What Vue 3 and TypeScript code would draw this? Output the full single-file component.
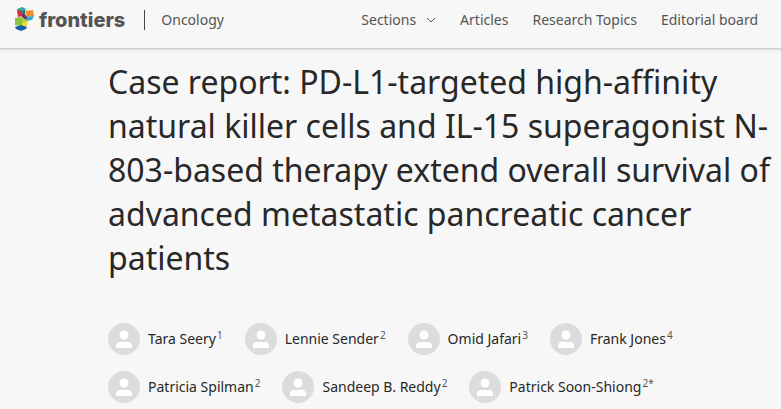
<script setup lang="ts">
interface Author {
  name: string
  mark: string
}

const links: string[] = ['Articles', 'Research Topics', 'Editorial board']

const authorRows: Author[][] = [
  [
    { name: 'Tara Seery', mark: '1' },
    { name: 'Lennie Sender', mark: '2' },
    { name: 'Omid Jafari', mark: '3' },
    { name: 'Frank Jones', mark: '4' },
  ],
  [
    { name: 'Patricia Spilman', mark: '2' },
    { name: 'Sandeep B. Reddy', mark: '2' },
    { name: 'Patrick Soon-Shiong', mark: '2*' },
  ],
]
</script>

<template>
  <div class="page">
    <header class="bar">
      <a class="brand" href="#">
        <svg class="logo" viewBox="0 0 20 26" aria-hidden="true">
          <path d="M2 2 7 0l4 2-1 2-4 1-4-2z" fill="#2aa9a5" />
          <path d="M2 3l5 1 1 5-5 1z" fill="#d92a35" />
          <path d="M7 4l3-1v4l-2 3z" fill="#1b7f6b" />
          <path d="M10 4l8-1 1 6-7 1z" fill="#f58a28" />
          <path d="M11 10l8-1-2 4-6 1-1-1z" fill="#2ba9d8" />
          <path d="M7 7l2-1 3 4-1 4-2 1-2-5z" fill="#66306f" />
          <path d="M0 11l7-1v9l-7-1z" fill="#8bc53f" />
          <path d="M7 13l6 1-1 5-5 1z" fill="#f0df2e" />
          <path d="M7 10l6 4-6 2z" fill="#b4cf3b" />
          <path d="M0 20l6-2 6 2-1 2-5 2-5-2z" fill="#175ba8" />
        </svg>
        <span class="wordmark">frontiers</span>
      </a>
      <a class="journal" href="#">Oncology</a>
      <nav class="nav" aria-label="Journal">
        <button class="link" type="button">
          Sections
          <svg class="chevron" viewBox="0 0 10 6" aria-hidden="true">
            <path d="M1 1l4 4 4-4" fill="none" stroke="currentColor" />
          </svg>
        </button>
        <a v-for="link in links" :key="link" class="link" href="#">{{ link }}</a>
      </nav>
    </header>
    <main class="article">
      <h1 class="title">
        Case report: PD-L1-targeted high-affinity natural killer cells and IL-15 superagonist
        N-803-based therapy extend overall survival of advanced metastatic pancreatic cancer patients
      </h1>
      <div class="authors">
        <ul v-for="(row, index) in authorRows" :key="index" class="row">
          <li v-for="author in row" :key="author.name" class="author">
            <svg class="avatar" viewBox="0 0 32 32" aria-hidden="true">
              <circle cx="16" cy="16" r="16" fill="#dcdcdc" />
              <circle cx="16" cy="12" r="4.5" fill="#fff" />
              <path d="M8 25v-2c0-3 2-4 4-4h8c2 0 4 1 4 4v2z" fill="#fff" />
            </svg>
            <span class="name">{{ author.name }}</span>
            <sup class="mark">{{ author.mark }}</sup>
          </li>
        </ul>
      </div>
    </main>
  </div>
</template>

<style>
body {
  margin: 0;
  background: #f7f7f7;
}
</style>

<style scoped>
.page {
  min-height: 100vh;
  background: #f7f7f7;
  color: #282828;
  font-family: "Noto Sans", "Open Sans", sans-serif;
}

.bar {
  display: flex;
  align-items: center;
  height: 40px;
  padding: 0 23px 8px 15px;
  border-bottom: 1px solid #cfcfcf;
  box-shadow: 0 1px 2px rgba(0, 0, 0, 0.12);
  color: #555;
  font-size: 14px;
  line-height: 20px;
}

.brand {
  display: flex;
  align-items: center;
  gap: 4px;
  color: #555;
  text-decoration: none;
}

.logo {
  width: 20px;
  height: 26px;
}

.wordmark {
  font-family: Inter, "Liberation Sans", sans-serif;
  font-size: 20px;
  font-weight: 800;
}

.journal {
  margin-left: 19px;
  padding-left: 16px;
  border-left: 1px solid #444;
  color: #555;
  text-decoration: none;
}

.nav {
  display: flex;
  gap: 24px;
  margin-left: auto;
}

.link {
  display: flex;
  align-items: center;
  gap: 10px;
  padding: 0;
  border: 0;
  background: none;
  color: #555;
  font: inherit;
  text-decoration: none;
  white-space: nowrap;
}

.chevron {
  width: 10px;
  height: 6px;
}

.article {
  padding: 11px 8px 22px 108px;
}

.title {
  margin: 0;
  font-size: 32px;
  font-weight: 400;
  line-height: 44px;
}

.authors {
  display: grid;
  gap: 16px;
  margin-top: 43px;
}

.row {
  display: flex;
  flex-wrap: wrap;
  gap: 16px 22px;
  margin: 0;
  padding: 0;
  list-style: none;
}

.author {
  display: flex;
  align-items: center;
  font-size: 14px;
  line-height: 20px;
}

.avatar {
  width: 32px;
  height: 32px;
  margin-right: 8px;
}

.mark {
  align-self: flex-start;
  margin: 5px 0 0 1px;
  color: #555;
  font-size: 10px;
  line-height: 14px;
}
</style>
